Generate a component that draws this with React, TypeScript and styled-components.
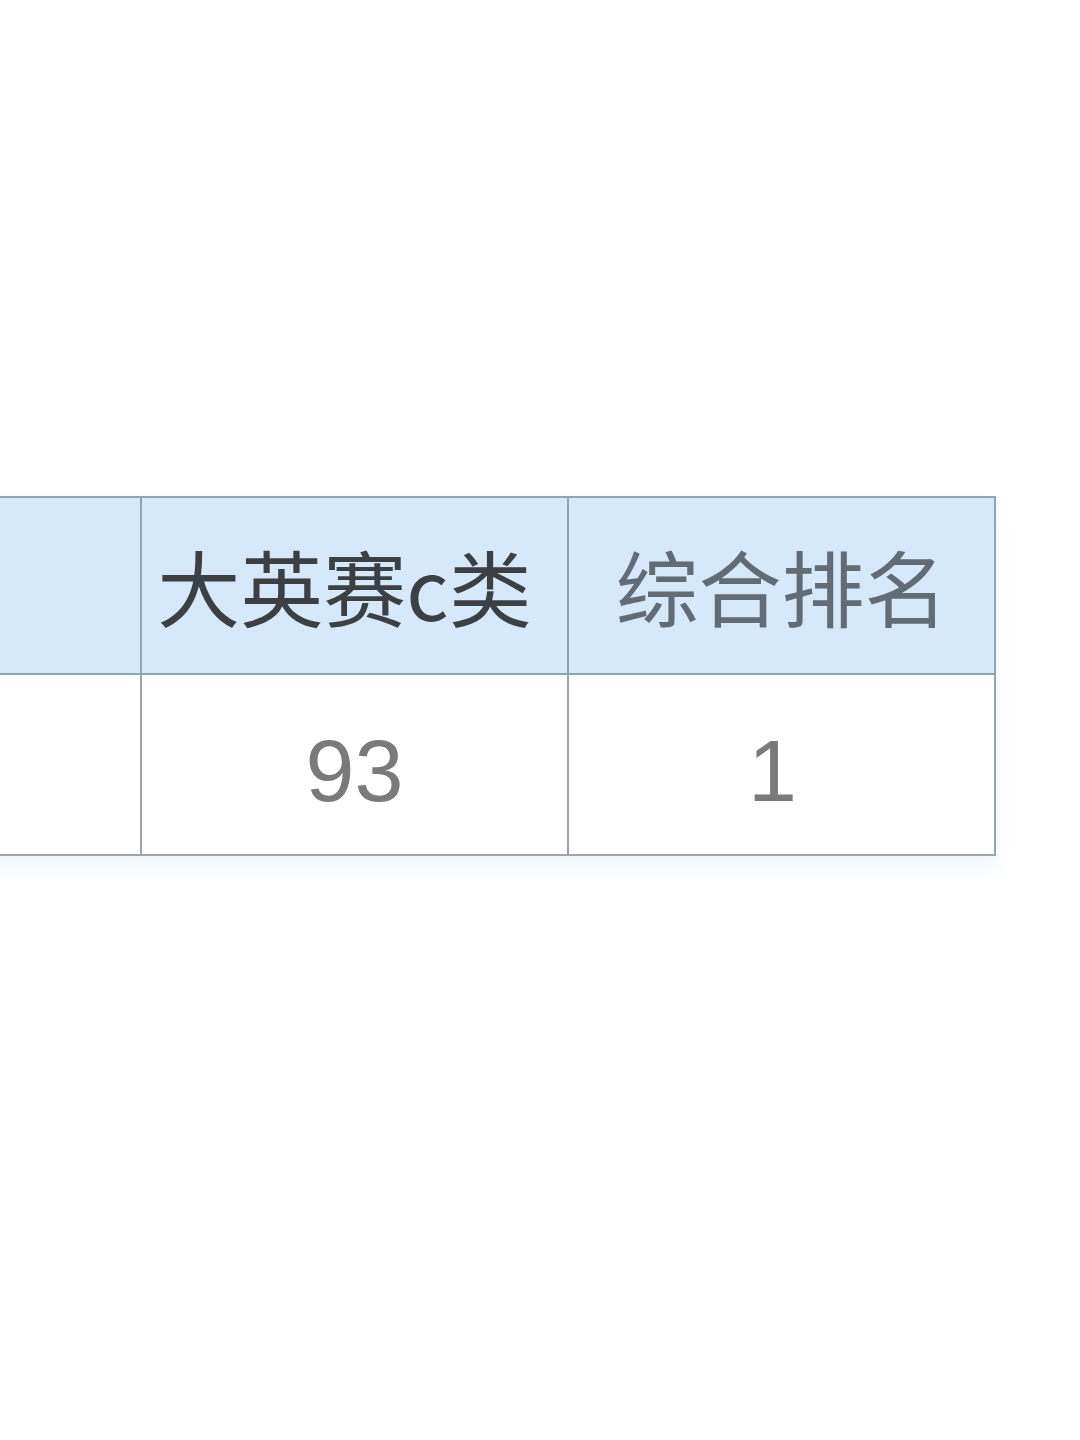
import React from 'react';
import styled, { createGlobalStyle } from 'styled-components';

const GlobalStyle = createGlobalStyle`
  html, body {
    margin: 0;
    padding: 0;
    background: #ffffff;
  }
  body {
    font-family: "Liberation Sans", "Noto Sans CJK SC", sans-serif;
    overflow: hidden;
  }
`;

type Tone = 'dark' | 'light';

const columns: { width: number; label: string; tone: Tone; headNudge: number; value: string; valueNudge: number }[] = [
  { width: 200, label: '', tone: 'dark', headNudge: 0, value: '', valueNudge: 0 },
  { width: 427, label: '大英赛c类', tone: 'dark', headNudge: 20, value: '93', valueNudge: 0 },
  { width: 427, label: '综合排名', tone: 'light', headNudge: 0, value: '1', valueNudge: 18 },
];

const App: React.FC = () => (
  <>
    <GlobalStyle />
    <Page>
      <ScoreTable>
        <colgroup>
          {columns.map((c, i) => (
            <Col key={i} $w={c.width} />
          ))}
        </colgroup>
        <thead>
          <tr>
            {columns.map((c, i) => (
              <HeadCell key={i} $tone={c.tone} $nudge={c.headNudge}>
                {c.label}
              </HeadCell>
            ))}
          </tr>
        </thead>
        <tbody>
          <tr>
            {columns.map((c, i) => (
              <BodyCell key={i} $nudge={c.valueNudge}>
                {c.value}
              </BodyCell>
            ))}
          </tr>
        </tbody>
      </ScoreTable>
    </Page>
  </>
);

export default App;

// --- styled components ---
const Page = styled.div`
  width: 1080px;
  height: 1440px;
  padding-top: 496px;
  box-sizing: border-box;
`;

const ScoreTable = styled.table`
  margin-left: -60px;
  width: 1054px;
  border-collapse: collapse;
  table-layout: fixed;
  box-shadow: 0 10px 18px rgba(205, 225, 240, 0.35);
`;

const Col = styled.col<{ $w: number }>`
  width: ${(p) => p.$w}px;
`;

const HeadCell = styled.th<{ $tone: Tone; $nudge: number }>`
  height: 177px;
  padding: 0 ${(p) => p.$nudge}px 0 0;
  background: #d5e9fa;
  border: 2px solid #8ea5b2;
  font-family: "Noto Sans CJK SC", "Liberation Sans", sans-serif;
  font-size: 83px;
  font-weight: 400;
  line-height: 1;
  text-align: center;
  vertical-align: middle;
  color: ${(p) => (p.$tone === 'dark' ? '#3b4045' : '#616c76')};
  box-sizing: border-box;
`;

const BodyCell = styled.td<{ $nudge: number }>`
  height: 181px;
  padding: 12px ${(p) => p.$nudge}px 0 0;
  background: #ffffff;
  border: 2px solid #9ea5a8;
  font-family: "Liberation Sans", "Noto Sans", sans-serif;
  font-size: 88px;
  line-height: 1;
  text-align: center;
  vertical-align: middle;
  color: #7a7a7a;
  box-sizing: border-box;
`;
